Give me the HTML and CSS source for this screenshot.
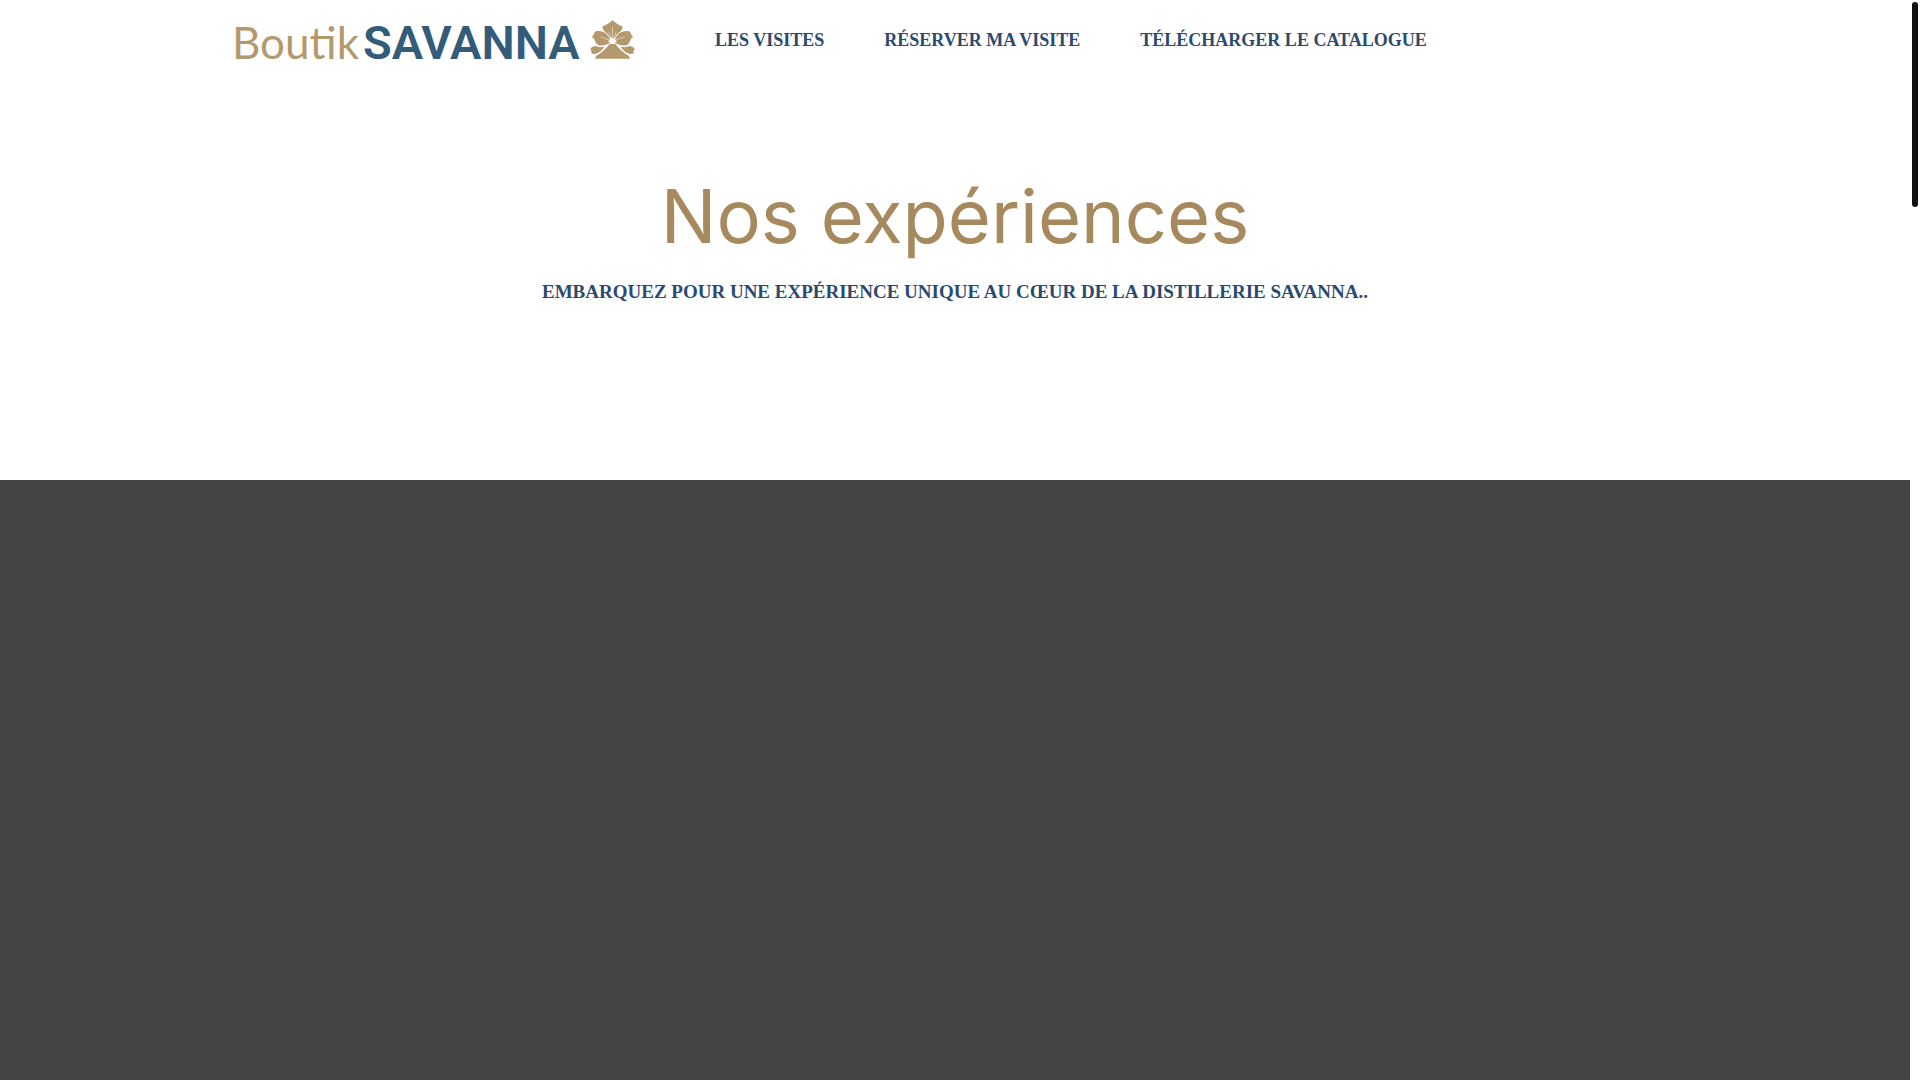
FILE: index.html
```html
<!DOCTYPE html>
<html lang="fr">

<head>
    <meta charset="UTF-8">
    <meta name="viewport" content="width=device-width, initial-scale=1.0">
    <title>Nos expériences - Boutik Savanna</title>
    <link rel="stylesheet" href="styles.css">
</head>

<body>
    <div class="page">
        <header class="header">
            <a class="logo" href="#">
                <span class="logo-boutik">Boutik</span>
                <span class="logo-savanna">SAVANNA</span>
                <svg class="logo-flower" viewBox="57 30 136 118" aria-hidden="true">
                    <g fill="#b4996d">
                        <!-- petals -->
                        <path d="M125 92 L100 66 C98 59 91 52 96 49 C108 45 118 37 125 31 C132 37 142 45 154 49 C159 52 152 59 150 66 Z" />
                        <path d="M123 94 C113 104 99 108 84 107 C76 104 74 99 72 93 C70 87 66 84 62 81 C69 78 69 66 75 64 C98 61 114 73 123 94 Z" />
                        <path d="M127 94 C137 104 151 108 166 107 C174 104 176 99 178 93 C180 87 184 84 188 81 C181 78 181 66 175 64 C152 61 136 73 127 94 Z" />
                        <path d="M74 109 C62 110 56 117 59 121 C66 123 55 130 65 132 C79 135 91 124 101 110 C92 113 82 113 74 109 Z" />
                        <path d="M176 109 C188 110 194 117 191 121 C184 123 195 130 185 132 C171 135 159 124 149 110 C158 113 168 113 176 109 Z" />
                        <path d="M117 101 L133 101 C143 115 157 129 174 138 L178 147 L72 147 L76 138 C93 129 107 115 117 101 Z" />
                    </g>
                    <!-- gaps between the petals -->
                    <path d="M92 60 C105 66 113 76 121 91 M158 60 C145 66 137 76 129 91" fill="none" stroke="#fff" stroke-width="3" />
                    <!-- veins and heart of the flower -->
                    <path d="M125 51 V94 M114 67 L125 94 L136 67 M89 81 L125 94 L161 81" fill="none" stroke="#fff" stroke-width="1.5" />
                    <path d="M125 82 L128 87 L134 84 L132 90 L139 94 L133 97 L135 103 L127 101 L125 104 L123 101 L115 103 L117 97 L111 94 L118 90 L116 84 L122 87 Z" fill="#fff" />
                </svg>
            </a>
            <nav class="menu">
                <a href="#">LES VISITES</a>
                <a href="#">RÉSERVER MA VISITE</a>
                <a href="#">TÉLÉCHARGER LE CATALOGUE</a>
            </nav>
        </header>

        <main>
            <section class="intro">
                <h1>Nos expériences</h1>
                <p>EMBARQUEZ POUR UNE EXPÉRIENCE UNIQUE AU CŒUR DE LA DISTILLERIE SAVANNA..</p>
            </section>
            <section class="banner"></section>
        </main>
    </div>

    <div class="scroll-track">
        <div class="scroll-thumb"></div>
    </div>
</body>

</html>
```

FILE: styles.css
```css
* {
    margin: 0;
    padding: 0;
    box-sizing: border-box;
}

body {
    display: flex;
    min-height: 100vh;
    background-color: #fff;
    color: #2b4a6f;
    font-family: 'Liberation Serif', serif;
}

a {
    color: inherit;
    text-decoration: none;
}

.page {
    flex: 1;
    display: flex;
    flex-direction: column;
}

.header {
    display: flex;
    align-items: center;
    gap: 80px;
    height: 80px;
    padding-left: 232px;
}

/* Logo */
.logo {
    display: flex;
    align-items: baseline;
    width: 403px;
    padding-top: 4px;
    line-height: 56px;
}

.logo-boutik {
    color: #b4996d;
    font-family: Lato, sans-serif;
    font-size: 44px;
    font-weight: 400;
}

.logo-savanna {
    margin-left: 4px;
    color: #335c7a;
    font-family: Roboto, sans-serif;
    font-size: 47px;
    font-weight: 600;
}

.logo-flower {
    flex-shrink: 0;
    width: 45px;
    height: 39px;
    margin-left: auto;
}

.menu {
    display: flex;
    gap: 60px;
    font-size: 18px;
    font-weight: 700;
    white-space: nowrap;
}

main {
    flex: 1;
    display: flex;
    flex-direction: column;
}

.intro {
    height: 400px;
    padding-top: 92px;
    text-align: center;
}

.intro h1 {
    color: #a6895d;
    font-family: Inter, sans-serif;
    font-size: 74px;
    font-weight: 400;
    line-height: 88px;
}

.intro p {
    margin-top: 20px;
    font-size: 19px;
    font-weight: 700;
    line-height: 24px;
}

.banner {
    flex: 1;
    background-color: #444;
}

/* Scrollbar */
.scroll-track {
    width: 10px;
    padding: 2px;
}

.scroll-thumb {
    height: 205px;
    border-radius: 3px;
    background-color: #111;
}
```
